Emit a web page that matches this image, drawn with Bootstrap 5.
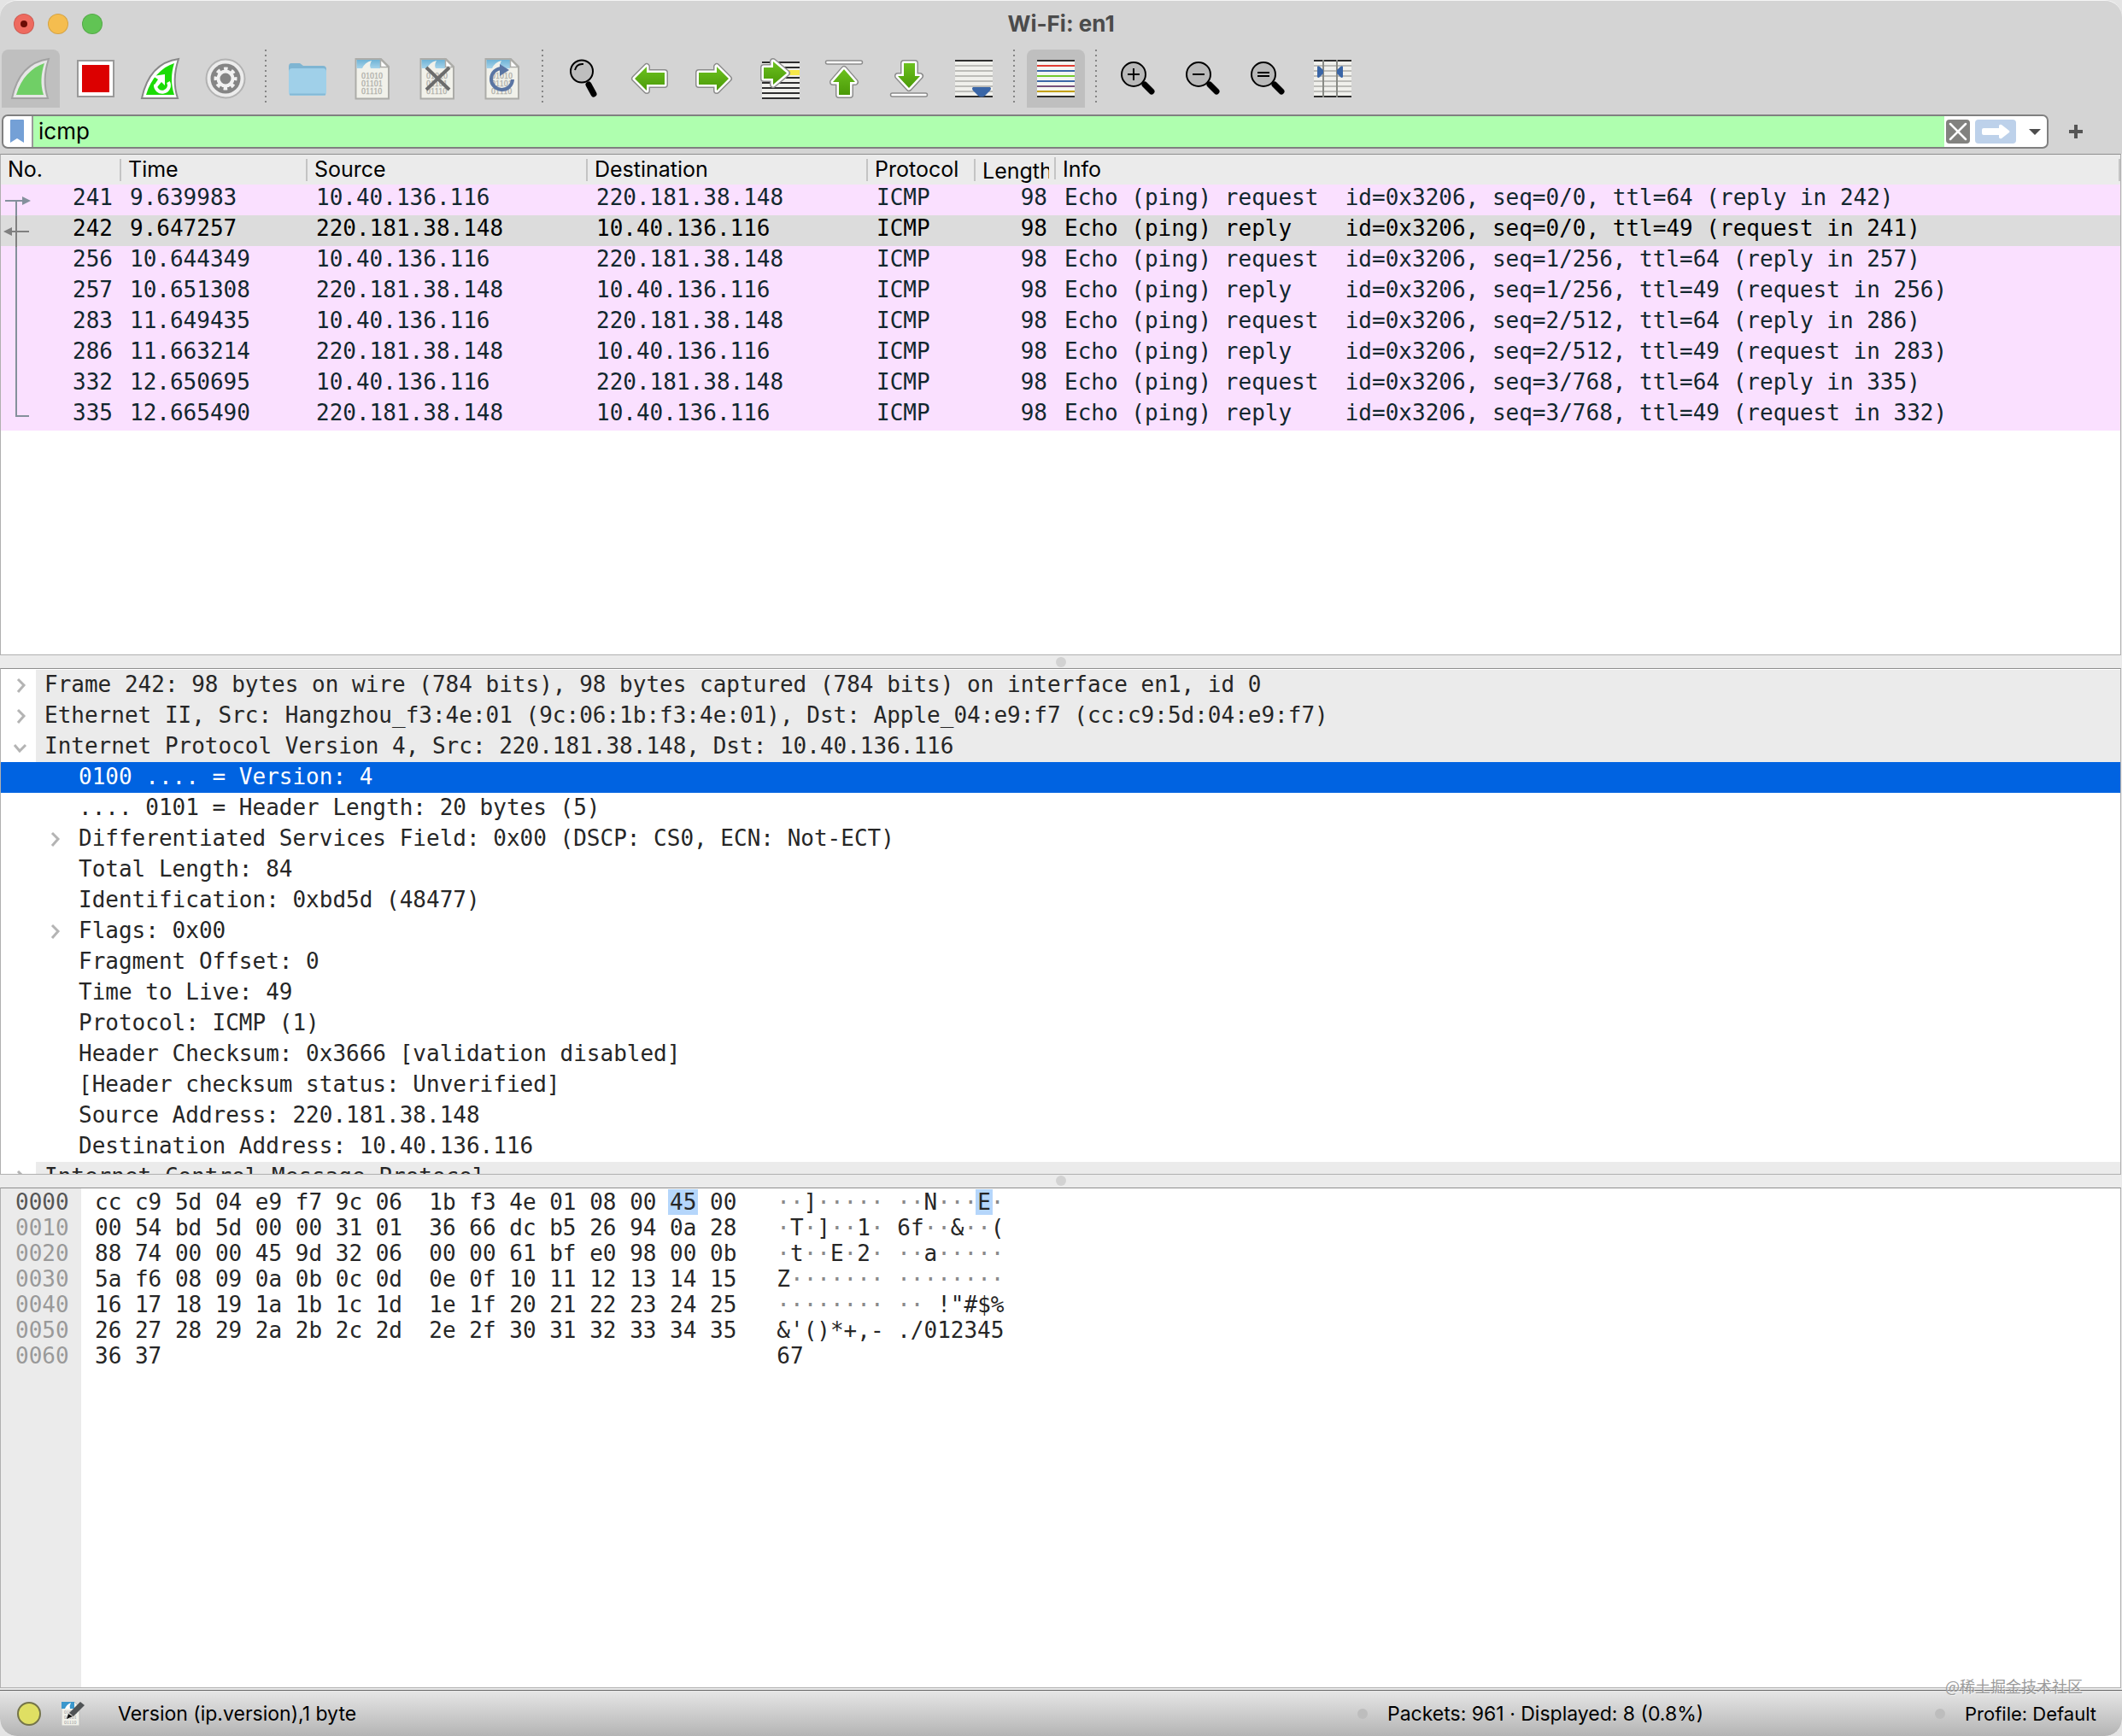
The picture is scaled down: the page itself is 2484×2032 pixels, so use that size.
<!DOCTYPE html>
<html lang="en">
<head>
<meta charset="utf-8">
<meta name="viewport" content="width=device-width, initial-scale=1">
<title>Wi-Fi: en1</title>
<link href="https://cdn.jsdelivr.net/npm/bootstrap@5.3.0/dist/css/bootstrap.min.css" rel="stylesheet">
<style>
:root{--mono:"DejaVu Sans Mono","Liberation Mono",monospace;--ui:Inter,"Liberation Sans",sans-serif;--chrome:#d4d4d4;--pane:#ebebeb;--rule:#8e8e8e}
body{font-family:var(--ui);font-size:25px;color:#000;background:#e4e4e4}
.app-window{background:var(--pane);border-radius:20px;border-top:1px solid #f4f4f4}
.title-strip{background:var(--chrome);height:57px;padding:0 16px 4px;font-size:26px;line-height:32px;color:#4b4b4b}
.traffic{width:24px;height:24px;border:1px solid #0002;border-radius:50%}
.tool-strip{background:var(--chrome);padding:0 2px 8px;gap:8px}
.tool{width:68px;height:68px;border-radius:8px 8px 0 0}
.tool.active{background:#bfbfbf}
.tool svg{width:68px;height:68px;display:block}
.tool-sep{width:12px;height:64px;background:repeating-linear-gradient(#858585 0 2px,transparent 2px 6px) 4px 0/2px 100% no-repeat}
.filter-strip{background:var(--chrome);padding:0 46px 6px 2px}
.filter-box{height:40px;border:2px solid #808080;border-radius:7px;background:#fff}
.filter-input{background:#afffaf;border-left:2px solid #999;padding:0 6px;height:36px;line-height:36px;font-size:26px}
.fbtn{height:28px;border-radius:5px}
.pane{min-height:0;margin-right:1px;border:1px solid #b0b0b0;border-top-color:var(--rule);background:#fff;overflow:hidden}
.pane-list{flex:587 1 0}.pane-tree{flex:593 1 0}.pane-hex{flex:586 1 0}
.split-bar{height:15px}
.split-bar i{width:12px;height:12px;border-radius:50%;background:#d2d2d2}
.packets{table-layout:fixed;border-collapse:separate;border-spacing:0}
.packets th{padding:0;height:35px;background:var(--pane);font-weight:400}
.packets th div{height:26px;line-height:25px;padding:0 6px 0 8px;border-right:2px solid #c4c4c4;white-space:nowrap}
.packets th div span{display:block;overflow:hidden;line-height:32px;margin:-4px 0}
.packets td{height:36px;padding:0 10px 6px;line-height:30px;font-family:var(--mono);font-size:26px;white-space:pre;background:#fae0ff;color:#12272e}
.packets tr.current td{background:#dcdcdc;color:#000}
.flow-lines{left:0;top:0}
.tree,.hexdump{font-family:var(--mono);font-size:26px;color:#262626}
.tree{padding-top:1px}
.tree li{height:36px}
.tree li>span{flex:1;line-height:34px;padding-left:10px;white-space:pre}
.tree li.proto>span{background:var(--pane)}
.tree .lvl1{padding-left:40px}
.tree li.picked{background:#0063e1;color:#fff}
.twist{width:41px;height:36px;flex:none}
.hexdump{line-height:30px;white-space:pre}
.hex-off{width:94px;padding:1px 0 0 17px;background:var(--pane);color:#999}
.hex-off b{font-weight:400;color:#555}
.hex-body{padding:1px 0 0 16px}
.hex-body mark{background:#b5d6fb;color:inherit;padding:0 2px;margin:0 -2px}
.hex-body s{text-decoration:none;color:#8a8a8a}
.status-strip{height:54px;margin-top:2px;border-top:1px solid #666;border-radius:0 0 20px 20px;background:linear-gradient(#e6e6e6,#b4b4b4);font-size:23px;line-height:32px;padding-left:20px;white-space:nowrap}
.grip{width:12px;height:12px;border-radius:50%;background:#bdbdbd;margin-right:23px}
.status-packets{width:676px}.status-profile{width:219px;font-size:22px}
.stamp{right:46px;bottom:46px;font:18px "Noto Sans CJK SC",sans-serif;color:#9b9b9b;text-shadow:1px 1px 0 #fff8}
</style>
<script src="https://cdn.jsdelivr.net/npm/bootstrap@5.3.0/dist/js/bootstrap.bundle.min.js"></script>
</head>
<body>
<svg width="0" height="0" class="position-absolute" aria-hidden="true">
<defs>
<linearGradient id="green" x2="0" y2="1"><stop stop-color="#6cc11f"/><stop offset="1" stop-color="#4b9a08"/></linearGradient>
<linearGradient id="sky" x2="0" y2="1"><stop stop-color="#6fb3d6"/><stop offset="1" stop-color="#a5d3ea"/></linearGradient>
<symbol id="sheet" viewBox="0 0 68 68">
<path d="M14.500 11H44L53 20V57.500H14.500Z" fill="#f1f1ea" stroke="#acaca8" stroke-width="2"/>
<path d="M15.500 12H43V22H15.500Z" fill="url(#sky)"/>
<path d="M22 22Q25 15 33 13Q30 18 32 22Z" fill="#f1f1ea"/>
<path d="M43.500 11.500V20.500H52.500Z" fill="#fff" stroke="#acaca8" stroke-width="1.500"/>
<g font-family="Liberation Serif,serif" font-size="10" fill="#b2b2ac" stroke="#b2b2ac" stroke-width=".3"><text x="21" y="34">01010</text><text x="21" y="43">01101</text><text x="21" y="52">01110</text></g>
</symbol>
<symbol id="lens" viewBox="0 0 68 68">
<path d="M42 41L50 49" stroke="#000" stroke-width="7" stroke-linecap="round"/><circle cx="29" cy="29" r="14" fill="#b9b9b9" stroke="#000" stroke-width="2"/>
</symbol>
<symbol id="rows" viewBox="0 0 68 68">
<path d="M12 12H56V56H12Z" fill="#f0f0ec"/><path d="M12 19H56M12 25H56M12 31H56M12 37H56M12 43H56M12 49H56" stroke="#bcbcb8" stroke-width="2"/><path d="M12 13H56M12 55H56" stroke="#2e2e2e" stroke-width="2"/>
</symbol>
<path id="a-left" d="M17 34L31 20V27H52V41H31V48Z"/>
<path id="a-goto" d="M16 21H27V14L43 27.500L27 41V34H16Z"/>
<path id="a-up" d="M34 23L47 38H41V53H28V38H21Z"/>
<path id="a-down" d="M34 45L47 31H41V16H28V31H21Z"/>
<path id="cv" d="M20 11L27 18L20 26"/><path id="cd" d="M16 16L22 23L29 16"/>
</defs>
</svg>

<div class="app-window d-flex flex-column vh-100 overflow-hidden position-relative">
<header class="title-strip position-relative d-flex align-items-center">
  <div class="d-flex gap-3">
    <button class="traffic btn p-0 d-flex align-items-center justify-content-center" style="background:#ee6a5f" aria-label="Close"><svg width="8" height="8"><circle cx="4" cy="4" r="4" fill="#6b0c05"/></svg></button>
    <button class="traffic btn p-0" style="background:#f5bd4f" aria-label="Minimise"></button>
    <button class="traffic btn p-0" style="background:#61c454" aria-label="Zoom"></button>
  </div>
  <div class="position-absolute start-50 translate-middle-x fw-bold">Wi-Fi: en1</div>
</header>

<nav class="tool-strip d-flex" aria-label="Main toolbar">
  <button class="tool btn border-0 p-0 active" aria-label="Start capture"><svg viewBox="0 0 68 68"><path d="M55 11C33 14 18 29 12 57H54C49 42 50 26 55 11Z" fill="#e6e6e6" stroke="#a2a2a2" stroke-width="2"/><path d="M50 16C35 21 23 33 17 53H49C45 41 46 28 50 16Z" fill="#70cf66"/></svg></button>
  <button class="tool btn border-0 p-0" aria-label="Stop capture"><svg viewBox="0 0 68 68"><path d="M13 13H55V55H13Z" fill="#fff" stroke="#999" stroke-width="2"/><path d="M18 18H50V50H18Z" fill="#dc0000"/></svg></button>
  <button class="tool btn border-0 p-0" aria-label="Restart capture"><svg viewBox="0 0 68 68"><path d="M55 11C33 14 18 29 12 57H54C49 42 50 26 55 11Z" fill="#fff" stroke="#888" stroke-width="2"/><path d="M50 16C35 21 23 33 17 53H50C46 41 46 28 50 16Z" fill="#1bdc06"/><path d="M28 41A8 8 0 1 0 43 38" fill="none" stroke="#fff" stroke-width="4"/><path d="M25 31L39 29V42L35 38L30 44L27 41L31 35Z" fill="#fff"/></svg></button>
  <button class="tool btn border-0 p-0" aria-label="Capture options"><svg viewBox="0 0 68 68"><circle cx="34" cy="34" r="22.500" fill="#ececec" stroke="#b2b2b2" stroke-width="2"/><circle cx="34" cy="34" r="17.500" fill="#858585"/><circle cx="34" cy="34" r="8.500" fill="none" stroke="#f2f2f2" stroke-width="4"/><circle cx="34" cy="34" r="11.500" fill="none" stroke="#f2f2f2" stroke-width="4" stroke-dasharray="4.500 4.530" stroke-dashoffset="2.250"/></svg></button>
  <div class="tool-sep"></div>
  <button class="tool btn border-0 p-0" aria-label="Open"><svg viewBox="0 0 68 68"><path d="M12 20Q12 16 15 16H25L29 19H52Q56 19 56 23V50H12Z" fill="#7fb5d2"/><path d="M12 26Q12 22 16 22H52Q56 22 56 26V50Q56 54 52 54H16Q12 54 12 50Z" fill="#a0d0e9"/><path d="M13 52.500H55" stroke="#84b9d6" stroke-width="2"/></svg></button>
  <button class="tool btn border-0 p-0" aria-label="Save"><svg><use href="#sheet"/></svg></button>
  <button class="tool btn border-0 p-0" aria-label="Close file"><svg viewBox="0 0 68 68"><use href="#sheet"/><path d="M21 21L48 47M48 21L21 47" stroke="#6c6c6c" stroke-width="4"/></svg></button>
  <button class="tool btn border-0 p-0" aria-label="Reload file"><svg viewBox="0 0 68 68"><use href="#sheet"/><path d="M34 22A12.500 12.500 0 1 0 46 35" fill="none" stroke="#5a75a3" stroke-width="4"/><path d="M31 17L42 24L31 31Z" fill="#5a75a3"/></svg></button>
  <div class="tool-sep"></div>
  <button class="tool btn border-0 p-0" aria-label="Find packet"><svg viewBox="0 0 68 68"><path d="M39 41L45 52" stroke="#000" stroke-width="7" stroke-linecap="round"/><circle cx="31" cy="25.500" r="13" fill="#bebebe" stroke="#000" stroke-width="2"/><path d="M23 24Q25 16 33 17" fill="none" stroke="#000" stroke-width="2"/></svg></button>
  <button class="tool btn border-0 p-0" aria-label="Go back"><svg viewBox="0 0 68 68" stroke-linejoin="round"><use href="#a-left" stroke="#8c8c8c" stroke-width="8"/><use href="#a-left" stroke="#fff" stroke-width="5"/><use href="#a-left" fill="url(#green)"/></svg></button>
  <button class="tool btn border-0 p-0" aria-label="Go forward"><svg viewBox="0 0 68 68" stroke-linejoin="round"><g transform="matrix(-1 0 0 1 68 0)"><use href="#a-left" stroke="#8c8c8c" stroke-width="8"/><use href="#a-left" stroke="#fff" stroke-width="5"/><use href="#a-left" fill="url(#green)"/></g></svg></button>
  <button class="tool btn border-0 p-0" aria-label="Go to packet"><svg viewBox="0 0 68 68" stroke-linejoin="round"><path d="M14 14H58V58H14Z" fill="#f0f0ec"/><path d="M14 15H58M14 21H58M14 33H58M14 39H58M14 45H58M14 51H58M14 57H58" stroke="#2e2e2e" stroke-width="2"/><path d="M40 27H58" stroke="#f7e94a" stroke-width="6"/><use href="#a-goto" stroke="#8c8c8c" stroke-width="8"/><use href="#a-goto" stroke="#fff" stroke-width="5"/><use href="#a-goto" fill="url(#green)"/></svg></button>
  <button class="tool btn border-0 p-0" aria-label="First packet"><svg viewBox="0 0 68 68" stroke-linejoin="round"><rect x="12.500" y="13" width="43" height="4" rx="2" fill="#fff" stroke="#8c8c8c" stroke-width="1.500"/><use href="#a-up" stroke="#8c8c8c" stroke-width="8"/><use href="#a-up" stroke="#fff" stroke-width="5"/><use href="#a-up" fill="url(#green)"/></svg></button>
  <button class="tool btn border-0 p-0" aria-label="Last packet"><svg viewBox="0 0 68 68" stroke-linejoin="round"><rect x="12.500" y="51" width="43" height="4" rx="2" fill="#fff" stroke="#8c8c8c" stroke-width="1.500"/><use href="#a-down" stroke="#8c8c8c" stroke-width="8"/><use href="#a-down" stroke="#fff" stroke-width="5"/><use href="#a-down" fill="url(#green)"/></svg></button>
  <button class="tool btn border-0 p-0" aria-label="Auto scroll"><svg viewBox="0 0 68 68"><use href="#rows"/><path d="M33 44H53Q55 45 53 48L47 54Q43 57 39 54L33 48Q31 45 33 44Z" fill="#3a66a7"/></svg></button>
  <div class="tool-sep"></div>
  <button class="tool btn border-0 p-0 active" aria-label="Colorize"><svg viewBox="0 0 68 68" stroke-width="2"><path d="M12 12H56V56H12Z" fill="#f4f6f2"/><path d="M12 13H56M12 55H56" stroke="#2e2e2e"/><path d="M12 19H56" stroke="#e03c32"/><path d="M12 25H56M12 37H56" stroke="#3a66a7"/><path d="M12 31H56" stroke="#73c92d"/><path d="M12 43H56" stroke="#75507b"/><path d="M12 49H56" stroke="#c4a000"/></svg></button>
  <div class="tool-sep"></div>
  <button class="tool btn border-0 p-0" aria-label="Zoom in"><svg viewBox="0 0 68 68"><use href="#lens"/><path d="M22 29H36M29 22V36" stroke="#000" stroke-width="2"/></svg></button>
  <button class="tool btn border-0 p-0" aria-label="Zoom out"><svg viewBox="0 0 68 68"><use href="#lens"/><path d="M22 29H36" stroke="#000" stroke-width="2"/></svg></button>
  <button class="tool btn border-0 p-0" aria-label="Normal size"><svg viewBox="0 0 68 68"><use href="#lens"/><path d="M22 27H36M22 31H36" stroke="#000" stroke-width="2"/></svg></button>
  <button class="tool btn border-0 p-0" aria-label="Resize columns"><svg viewBox="0 0 68 68"><use href="#rows"/><path d="M23 12V56M39 12V56" stroke="#888a85" stroke-width="2"/><path d="M16 20Q17 18 20 21L23 24V28L19 32Q17 34 16 32ZM46 20Q45 18 42 21L39 24V28L43 32Q45 34 46 32Z" fill="#3a66a7"/></svg></button>
</nav>

<form class="filter-strip d-flex align-items-center" onsubmit="return false">
  <div class="filter-box d-flex align-items-center flex-grow-1 overflow-hidden me-4">
    <button type="button" class="btn border-0 p-0 d-flex" aria-label="Bookmarks"><svg width="33" height="36"><path d="M8 5Q8 4 9 4H23Q24 4 24 5V31L16 26L8 31Z" fill="#74a0d6"/></svg></button>
    <input class="filter-input flex-grow-1 border-top-0 border-bottom-0 border-end-0 rounded-0" type="text" value="icmp" aria-label="Display filter">
    <button type="button" class="fbtn btn border-0 p-0 d-flex" style="margin-left:2px;margin-right:6px" aria-label="Clear"><svg width="28" height="28"><rect width="28" height="28" rx="4" fill="#82827f"/><path d="M5 5L23 23M23 5L5 23" stroke="#fff" stroke-width="2.500" stroke-linecap="round"/></svg></button>
    <button class="fbtn btn border-0 p-0 d-flex" aria-label="Apply"><svg width="48" height="28"><rect width="48" height="28" rx="4" fill="#bdd1ea"/><path d="M10 10H28V7Q29 5 31 6L40 13Q41 14 40 15L31 22Q29 23 28 21V18H10Q8 18 8 16V12Q8 10 10 10Z" fill="#fff"/></svg></button>
    <button type="button" class="fbtn btn border-0 p-0 d-flex" aria-label="Recent filters"><svg width="36" height="28"><path d="M15 11H29L22 18Z" fill="#4d4d4d"/></svg></button>
  </div>
  <button type="button" class="btn border-0 p-0 d-flex" aria-label="Add filter button"><svg width="16" height="16"><path d="M0 8H16M8 0V16" stroke="#555" stroke-width="4"/></svg></button>
</form>

<main class="d-flex flex-column flex-grow-1" style="min-height:0">
<section class="pane pane-list position-relative" aria-label="Packet list">
<table class="packets w-100">
<colgroup><col style="width:141px"><col style="width:218px"><col style="width:328px"><col style="width:328px"><col style="width:126px"><col style="width:94px"><col></colgroup>
<thead><tr><th><div>No.</div></th><th><div>Time</div></th><th><div>Source</div></th><th><div>Destination</div></th><th><div>Protocol</div></th><th><div><span>Length</span></div></th><th><div>Info</div></th></tr></thead>
<tbody>
<tr><td class="text-end">241</td><td>9.639983</td><td>10.40.136.116</td><td>220.181.38.148</td><td>ICMP</td><td class="text-end">98</td><td>Echo (ping) request  id=0x3206, seq=0/0, ttl=64 (reply in 242)</td></tr>
<tr class="current"><td class="text-end">242</td><td>9.647257</td><td>220.181.38.148</td><td>10.40.136.116</td><td>ICMP</td><td class="text-end">98</td><td>Echo (ping) reply    id=0x3206, seq=0/0, ttl=49 (request in 241)</td></tr>
<tr><td class="text-end">256</td><td>10.644349</td><td>10.40.136.116</td><td>220.181.38.148</td><td>ICMP</td><td class="text-end">98</td><td>Echo (ping) request  id=0x3206, seq=1/256, ttl=64 (reply in 257)</td></tr>
<tr><td class="text-end">257</td><td>10.651308</td><td>220.181.38.148</td><td>10.40.136.116</td><td>ICMP</td><td class="text-end">98</td><td>Echo (ping) reply    id=0x3206, seq=1/256, ttl=49 (request in 256)</td></tr>
<tr><td class="text-end">283</td><td>11.649435</td><td>10.40.136.116</td><td>220.181.38.148</td><td>ICMP</td><td class="text-end">98</td><td>Echo (ping) request  id=0x3206, seq=2/512, ttl=64 (reply in 286)</td></tr>
<tr><td class="text-end">286</td><td>11.663214</td><td>220.181.38.148</td><td>10.40.136.116</td><td>ICMP</td><td class="text-end">98</td><td>Echo (ping) reply    id=0x3206, seq=2/512, ttl=49 (request in 283)</td></tr>
<tr><td class="text-end">332</td><td>12.650695</td><td>10.40.136.116</td><td>220.181.38.148</td><td>ICMP</td><td class="text-end">98</td><td>Echo (ping) request  id=0x3206, seq=3/768, ttl=64 (reply in 335)</td></tr>
<tr><td class="text-end">335</td><td>12.665490</td><td>220.181.38.148</td><td>10.40.136.116</td><td>ICMP</td><td class="text-end">98</td><td>Echo (ping) reply    id=0x3206, seq=3/768, ttl=49 (request in 332)</td></tr>
</tbody>
</table>
<svg class="flow-lines position-absolute" width="40" height="323" fill="none" stroke="#84909c" stroke-width="2" aria-hidden="true"><path d="M5 54H26M18 54V306H33"/><path d="M25 49L35 54L25 59Z" fill="#84909c" stroke="none"/><path d="M12 90H33M18 72V108" stroke="#808080"/><path d="M13 85L3 90L13 95Z" fill="#808080" stroke="none"/></svg>
</section>
<div class="split-bar d-flex align-items-center justify-content-center"><i></i></div>

<section class="pane pane-tree" aria-label="Packet details">
<ul class="tree list-unstyled m-0">
<li class="proto d-flex"><button class="twist btn border-0 p-0" aria-label="Expand"><svg width="41" height="36" fill="none" stroke="#b4b4b4" stroke-width="3" class="d-block"><use href="#cv"/></svg></button><span>Frame 242: 98 bytes on wire (784 bits), 98 bytes captured (784 bits) on interface en1, id 0</span></li>
<li class="proto d-flex"><button class="twist btn border-0 p-0" aria-label="Expand"><svg width="41" height="36" fill="none" stroke="#b4b4b4" stroke-width="3" class="d-block"><use href="#cv"/></svg></button><span>Ethernet II, Src: Hangzhou_f3:4e:01 (9c:06:1b:f3:4e:01), Dst: Apple_04:e9:f7 (cc:c9:5d:04:e9:f7)</span></li>
<li class="proto d-flex"><button class="twist btn border-0 p-0" aria-label="Collapse"><svg width="41" height="36" fill="none" stroke="#b4b4b4" stroke-width="3" class="d-block"><use href="#cd"/></svg></button><span>Internet Protocol Version 4, Src: 220.181.38.148, Dst: 10.40.136.116</span></li>
<li class="lvl1 d-flex picked"><div class="twist"></div><span>0100 .... = Version: 4</span></li>
<li class="lvl1 d-flex"><div class="twist"></div><span>.... 0101 = Header Length: 20 bytes (5)</span></li>
<li class="lvl1 d-flex"><button class="twist btn border-0 p-0" aria-label="Expand"><svg width="41" height="36" fill="none" stroke="#b4b4b4" stroke-width="3" class="d-block"><use href="#cv"/></svg></button><span>Differentiated Services Field: 0x00 (DSCP: CS0, ECN: Not-ECT)</span></li>
<li class="lvl1 d-flex"><div class="twist"></div><span>Total Length: 84</span></li>
<li class="lvl1 d-flex"><div class="twist"></div><span>Identification: 0xbd5d (48477)</span></li>
<li class="lvl1 d-flex"><button class="twist btn border-0 p-0" aria-label="Expand"><svg width="41" height="36" fill="none" stroke="#b4b4b4" stroke-width="3" class="d-block"><use href="#cv"/></svg></button><span>Flags: 0x00</span></li>
<li class="lvl1 d-flex"><div class="twist"></div><span>Fragment Offset: 0</span></li>
<li class="lvl1 d-flex"><div class="twist"></div><span>Time to Live: 49</span></li>
<li class="lvl1 d-flex"><div class="twist"></div><span>Protocol: ICMP (1)</span></li>
<li class="lvl1 d-flex"><div class="twist"></div><span>Header Checksum: 0x3666 [validation disabled]</span></li>
<li class="lvl1 d-flex"><div class="twist"></div><span>[Header checksum status: Unverified]</span></li>
<li class="lvl1 d-flex"><div class="twist"></div><span>Source Address: 220.181.38.148</span></li>
<li class="lvl1 d-flex"><div class="twist"></div><span>Destination Address: 10.40.136.116</span></li>
<li class="proto d-flex"><button class="twist btn border-0 p-0" aria-label="Expand"><svg width="41" height="36" fill="none" stroke="#b4b4b4" stroke-width="3" class="d-block"><use href="#cv"/></svg></button><span>Internet Control Message Protocol</span></li>
</ul>
</section>
<div class="split-bar d-flex align-items-center justify-content-center"><i></i></div>

<section class="pane pane-hex hexdump d-flex" aria-label="Packet bytes"><div class="hex-off"><b>0000</b>
0010
0020
0030
0040
0050
0060</div><div class="hex-body">cc c9 5d 04 e9 f7 9c 06  1b f3 4e 01 08 00 <mark>45</mark> 00   <s>··</s>]<s>·····</s> <s>··</s>N<s>···</s><mark>E</mark><s>·</s>
00 54 bd 5d 00 00 31 01  36 66 dc b5 26 94 0a 28   <s>·</s>T<s>·</s>]<s>··</s>1<s>·</s> 6f<s>··</s>&amp;<s>··</s>(
88 74 00 00 45 9d 32 06  00 00 61 bf e0 98 00 0b   <s>·</s>t<s>··</s>E<s>·</s>2<s>·</s> <s>··</s>a<s>·····</s>
5a f6 08 09 0a 0b 0c 0d  0e 0f 10 11 12 13 14 15   Z<s>·······</s> <s>········</s>
16 17 18 19 1a 1b 1c 1d  1e 1f 20 21 22 23 24 25   <s>········</s> <s>··</s> !"#$%
26 27 28 29 2a 2b 2c 2d  2e 2f 30 31 32 33 34 35   &amp;'()*+,- ./012345
36 37                                              67</div></section>
</main>

<footer class="status-strip d-flex align-items-center">
  <button class="btn border-0 p-0 d-flex" aria-label="Expert information"><svg width="28" height="28"><circle cx="14" cy="14" r="13" fill="#dfdf63" stroke="#74744a" stroke-width="2"/></svg></button>
  <button class="btn border-0 p-0 d-flex ms-4 me-auto" aria-label="Capture comment"><svg width="28" height="28"><path d="M0 0H15L21 6V28H0Z" fill="#f1f1ea" stroke="#bbb"/><path d="M0 0H15V8H0Z" fill="#3b97cc"/><path d="M4 8Q6 3 11 1Q9 5 10 8Z" fill="#fff"/><g font-family="Liberation Serif,serif" font-size="6" fill="#999"><text x="3" y="14">01010</text><text x="3" y="20">01101</text><text x="3" y="26">01110</text></g><path d="M9 13L22 0L27 4L14 17Z" fill="#4f5355"/><path d="M6 20L8 14L13 17Z" fill="#111"/></svg></button>
  <div class="flex-grow-1" style="padding-left:38px">Version (ip.version),1 byte</div>
  <div class="status-packets d-flex align-items-center"><span class="grip"></span>Packets: 961 · Displayed: 8 (0.8%)</div>
  <div class="status-profile d-flex align-items-center"><span class="grip"></span>Profile: Default</div>
</footer>
<div class="stamp position-absolute">@稀土掘金技术社区</div>
</div>
</body>
</html>
